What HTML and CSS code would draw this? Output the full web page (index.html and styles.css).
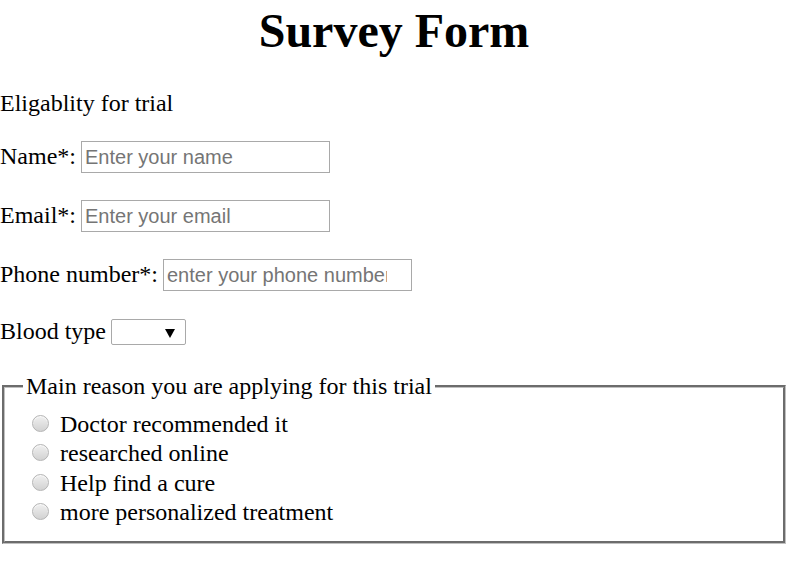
FILE: index.html
```html
<!DOCTYPE html>
<html lang="en">
<head>
<meta charset="utf-8">
<title>Survey Form</title>
<link rel="stylesheet" href="styles.css">
</head>
<body>
<h1 class="title">Survey Form</h1>
<p class="row">Eligablity for trial</p>
<form class="survey">
  <p class="row"><label for="name">Name*:</label> <input class="field" id="name" type="text" placeholder="Enter your name"></p>
  <p class="row"><label for="email">Email*:</label> <input class="field" id="email" type="email" placeholder="Enter your email"></p>
  <p class="row"><label for="phone">Phone number*:</label> <input class="field" id="phone" type="tel" placeholder="enter your phone number"></p>
  <p class="row"><label for="blood">Blood type</label> <span class="select-wrap"><select class="dropdown" id="blood"><option></option><option>A</option><option>B</option><option>AB</option><option>O</option></select></span></p>
  <fieldset class="reasons">
    <legend class="reasons-title">Main reason you are applying for this trial</legend>
    <div class="option"><input class="radio" type="radio" name="reason" id="r1"> <label for="r1">Doctor recommended it</label></div>
    <div class="option"><input class="radio" type="radio" name="reason" id="r2"> <label for="r2">researched online</label></div>
    <div class="option"><input class="radio" type="radio" name="reason" id="r3"> <label for="r3">Help find a cure</label></div>
    <div class="option"><input class="radio" type="radio" name="reason" id="r4"> <label for="r4">more personalized treatment</label></div>
  </fieldset>
</form>
</body>
</html>
```

FILE: styles.css
```css
html, body {
  background: #ffffff;
}

body {
  margin: 0 4px 0 0;
  font-family: "Liberation Serif", "Times New Roman", serif;
  font-size: 24px;
  line-height: 27px;
  color: #000000;
}

.title {
  margin: 4px 0 32px;
  font-size: 48px;
  line-height: 54px;
  font-weight: bold;
  text-align: center;
}

.row {
  margin: 24px 0;
}

.field {
  box-sizing: border-box;
  width: 249px;
  height: 32px;
  margin: 0 0 3px -1px;
  padding: 4px 24px 4px 3px;
  border: 1px solid #a9a9a9;
  border-radius: 0;
  font-family: "Liberation Sans", Arial, sans-serif;
  font-size: 20px;
  line-height: 22px;
  color: #000000;
  background: #ffffff;
  outline: none;
}

.field::placeholder {
  color: #757575;
  opacity: 1;
}

.select-wrap {
  position: relative;
  display: inline-block;
  overflow: hidden;
  margin-left: -1px;
  vertical-align: -6px;
}

.dropdown {
  display: block;
  box-sizing: border-box;
  width: 75px;
  height: 26px;
  margin: 0;
  padding: 0 4px;
  border: 1px solid #a9a9a9;
  border-radius: 2px;
  background: #ffffff;
  font-family: "Liberation Sans", Arial, sans-serif;
  font-size: 20px;
  color: #000000;
  -webkit-appearance: none;
  appearance: none;
  outline: none;
}

.select-wrap::after {
  content: "";
  position: absolute;
  top: 10px;
  right: 11px;
  width: 0;
  height: 0;
  border-left: 5px solid transparent;
  border-right: 5px solid transparent;
  border-top: 9px solid #000000;
  pointer-events: none;
}

.reasons {
  margin: 28px 2px 0;
  padding: 9px 18px 15px;
  border: 3px groove #c0c0c0;
}

.reasons-title {
  padding: 0 3px;
}

.option {
  height: 29.33px;
  line-height: 27px;
}

.radio {
  -webkit-appearance: none;
  appearance: none;
  box-sizing: border-box;
  display: inline-block;
  width: 17px;
  height: 17px;
  margin: 6px 5px 0 9px;
  padding: 0;
  border: 1px solid #b4b4b4;
  border-radius: 50%;
  background: linear-gradient(#f0f0f0, #d2d2d2);
  box-shadow: inset 0 1px 1px rgba(255, 255, 255, 0.8);
  vertical-align: baseline;
}
```
